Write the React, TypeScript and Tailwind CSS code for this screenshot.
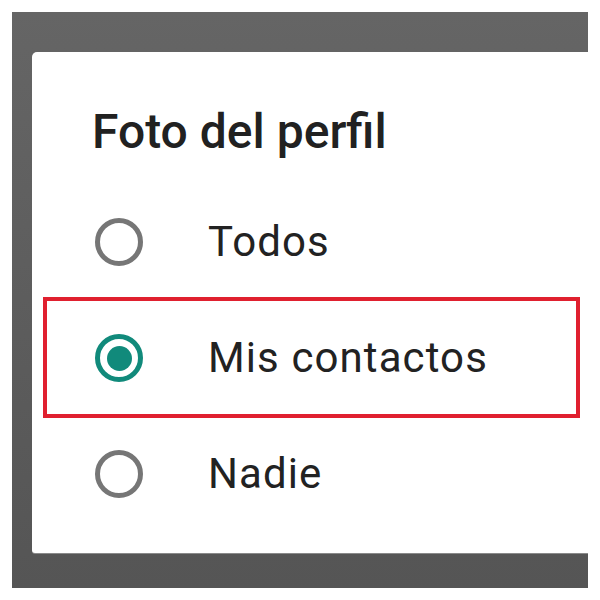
import { useState } from "react";

const OPTIONS = ["Todos", "Mis contactos", "Nadie"];

function Radio({ checked }: { checked: boolean }) {
  return (
    <span
      className={`flex h-[48px] w-[48px] shrink-0 items-center justify-center rounded-full border-[5px] ${
        checked ? "border-[#118a7b]" : "border-[#767676]"
      }`}
    >
      {checked && <span className="h-[25px] w-[25px] rounded-full bg-[#118a7b]" />}
    </span>
  );
}

export default function App() {
  const [selected, setSelected] = useState("Mis contactos");

  return (
    <div className="h-[600px] w-[600px] bg-white p-[12px]">
      <div className="flex h-full w-full flex-col bg-gradient-to-b from-[#656565] to-[#555555] pl-[20px] pt-[40px] pb-[35px]">
        <div
          className="flex flex-1 flex-col rounded-tl-[5px] rounded-bl-[3px] bg-white pt-[56px] shadow-[0_1px_0_#8a8a8a]"
          style={{ fontFamily: "Roboto, 'Liberation Sans', sans-serif" }}
        >
          <h1 className="h-[48px] pl-[60px] text-[48px] leading-[48px] font-medium text-[#212121]">
            Foto del perfil
          </h1>
          <div className="mt-[28px] flex flex-col">
            {OPTIONS.map((opt) => (
              <button
                key={opt}
                onClick={() => setSelected(opt)}
                className="relative flex h-[116px] items-center gap-[65px] pl-[63px] text-left"
              >
                <Radio checked={selected === opt} />
                <span className="text-[42px] leading-none tracking-[1.1px] text-[#222222]">{opt}</span>
                {opt === "Mis contactos" && (
                  <span className="pointer-events-none absolute top-[-3px] left-[11px] right-[8px] bottom-[-2px] border-[4px] border-[#e0202f]" />
                )}
              </button>
            ))}
          </div>
        </div>
      </div>
    </div>
  );
}
